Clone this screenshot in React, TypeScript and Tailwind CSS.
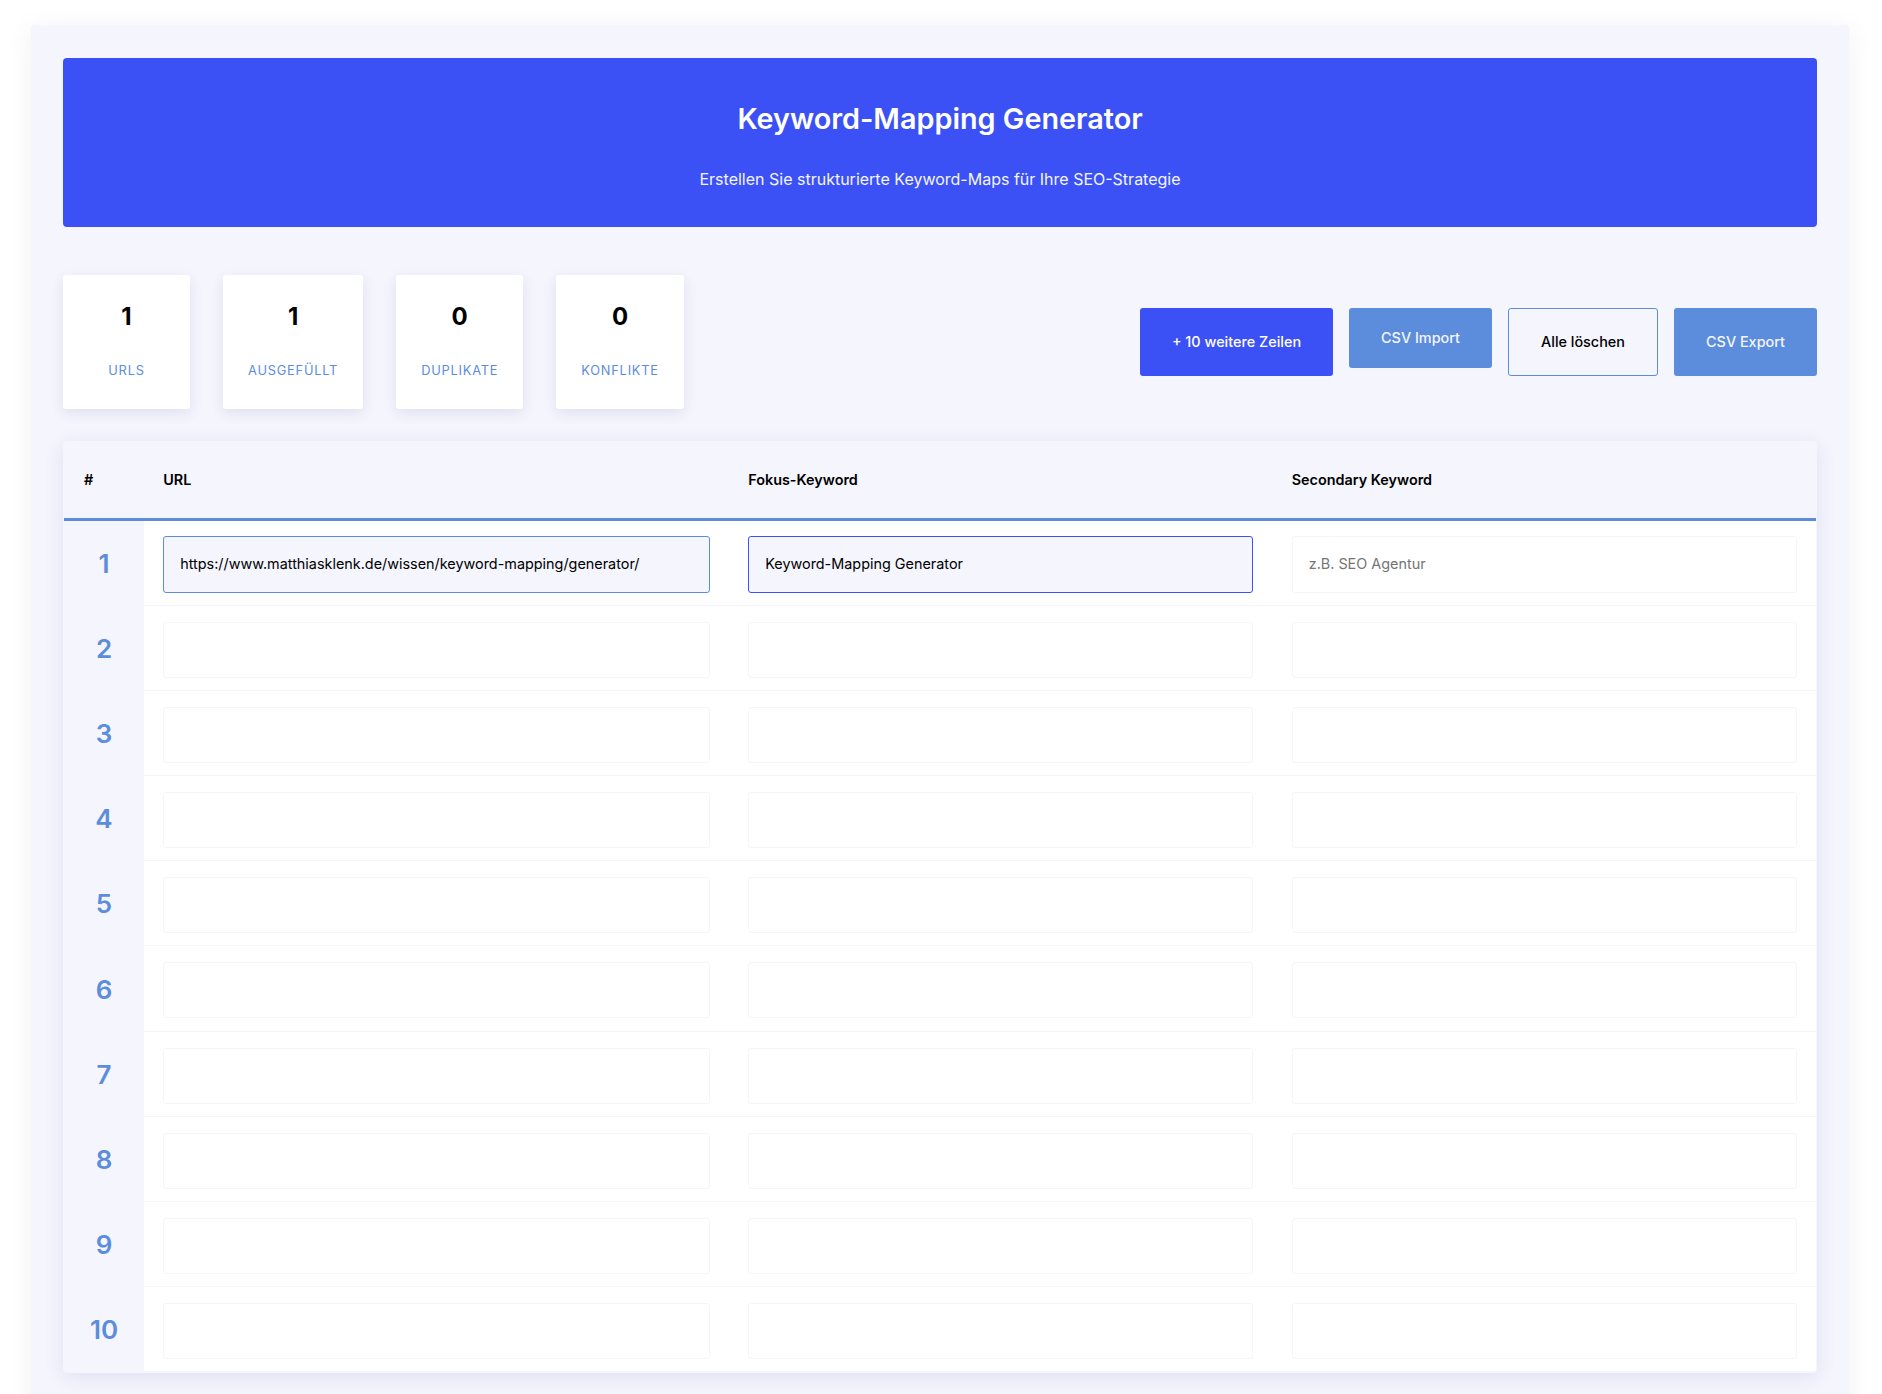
const stats = [
  { value: "1", label: "URLs" },
  { value: "1", label: "Ausgefüllt" },
  { value: "0", label: "Duplikate" },
  { value: "0", label: "Konflikte" },
];

const rows = [1, 2, 3, 4, 5, 6, 7, 8, 9, 10];

function Cell({ value, placeholder, className, first }: { value?: string; placeholder?: string; className?: string; first?: boolean }) {
  return (
    <div className={`px-[19.2px] ${first ? "pt-[15px]" : "pt-[16px]"}`}>
      <input
        readOnly
        value={value ?? ""}
        placeholder={placeholder}
        className={`block w-full ${first ? "h-[57px]" : "h-[56px]"} rounded-[3px] border px-[16px] pb-[2px] text-[14.4px] text-black placeholder:text-[#757575] outline-none ${className ?? "border-[#f4f5fd] bg-white"}`}
      />
    </div>
  );
}

export default function App() {
  return (
    <div className="h-[1394px] overflow-hidden bg-white font-['Inter',sans-serif]">
      <div className="ml-[31px] mt-[25px] w-[1818px] h-[1400px] bg-[#f4f5fd] px-[32px] pt-[33px] rounded-[4px] shadow-[0_4px_30px_rgba(0,0,0,0.06)]">
        {/* Header */}
        <header className="h-[169px] flex flex-col items-center bg-[#3b51f5] rounded-[4px] text-white">
          <h1 className="mt-[43px] text-[28.8px] leading-[36px] font-semibold">Keyword-Mapping Generator</h1>
          <p className="mt-[32px] text-[16px] leading-[20px] text-[#f4f5fd]">Erstellen Sie strukturierte Keyword-Maps für Ihre SEO-Strategie</p>
        </header>

        {/* Stats and actions */}
        <div className="mt-[48px] flex items-center justify-between">
          <div className="flex gap-[33px]">
            {stats.map((s) => (
              <div key={s.label} className="min-w-[127px] h-[134px] px-[25px] flex flex-col items-center bg-white rounded-[3px] shadow-[0_4px_14px_rgba(40,40,120,0.1)]">
                <div className="mt-[27px] text-[24px] leading-[30px] font-bold text-black">{s.value}</div>
                <div className="mt-[29px] text-[12.8px] leading-[20px] tracking-[0.8px] uppercase text-[#5c8ddc] whitespace-nowrap">{s.label}</div>
              </div>
            ))}
          </div>
          <div className="flex items-start gap-[16px]">
            <button className="w-[193px] h-[68px] rounded-[3px] bg-[#3b51f5] text-white text-[14.4px] font-medium">+ 10 weitere Zeilen</button>
            <button className="w-[143px] h-[60px] rounded-[3px] bg-[#5c8ddc] text-[#f4f5fd] text-[14.4px] font-medium">CSV Import</button>
            <button className="w-[150px] h-[68px] rounded-[3px] border border-[#5c8ddc] text-black text-[14.4px] font-medium">Alle löschen</button>
            <button className="w-[143px] h-[68px] rounded-[3px] bg-[#5c8ddc] text-[#f4f5fd] text-[14.4px] font-medium">CSV Export</button>
          </div>
        </div>

        {/* Table */}
        <div className="mt-[32px] bg-white border border-[#f4f5fd] rounded-[4px] shadow-[0_4px_20px_rgba(40,40,120,0.1)] overflow-hidden">
          <div className="grid grid-cols-[80px_585px_543.5px_1fr] h-[79px] items-center border-b-[3px] border-[#5c8ddc] bg-[#f4f5fd] text-[14.4px] font-semibold text-black">
            <div className="pl-[20px]">#</div>
            <div className="pl-[19.2px]">URL</div>
            <div className="pl-[19.2px]">Fokus-Keyword</div>
            <div className="pl-[19.2px]">Secondary Keyword</div>
          </div>
          {rows.map((n) => (
            <div key={n} className="grid grid-cols-[80px_585px_543.5px_1fr] h-[85.1px] border-b border-[#f4f5fd]">
              <div className="flex items-center justify-center pt-[1px] bg-[#f4f5fd] text-[26px] font-semibold text-[#5c8ddc]">{n}</div>
              {n === 1 ? (
                <>
                  <Cell first value="https://www.matthiasklenk.de/wissen/keyword-mapping/generator/" className="border-[#5c8ddc] bg-[#f4f5fd]" />
                  <Cell first value="Keyword-Mapping Generator" className="border-[#3b51f5] bg-[#f4f5fd]" />
                  <Cell first placeholder="z.B. SEO Agentur" />
                </>
              ) : (
                <>
                  <Cell />
                  <Cell />
                  <Cell />
                </>
              )}
            </div>
          ))}
        </div>
      </div>
    </div>
  );
}
